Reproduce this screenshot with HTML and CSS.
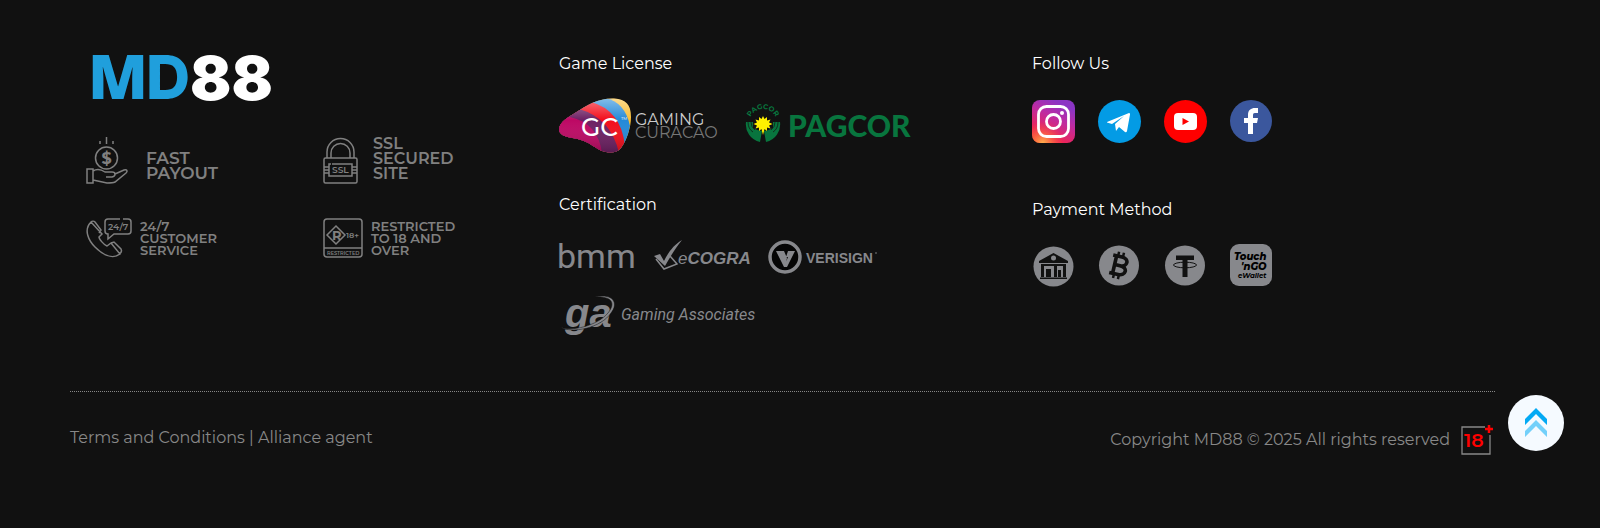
FILE: index.html
```html
<!DOCTYPE html>
<html lang="en">
<head>
  <meta charset="UTF-8">
  <title>MD88</title>
  <meta name="viewport" content="width=device-width, initial-scale=1.0">
  <link rel="stylesheet" href="styles.css">
</head>
<body>
  <footer class="footer">
    <div class="footer-top">
      <div class="footer-brand">
        <a href="#" class="logo" aria-label="MD88">
          <svg width="184" height="52" viewBox="0 0 184 52">
            <text class="logo-m" x="-4" y="47">M</text>
            <text class="logo-d" x="54" y="47">D</text>
            <text class="logo-88" x="98" y="48">88</text>
          </svg>
        </a>

        <ul class="features">
          <li class="feature feature-large">
            <svg class="line-icon" width="44" height="48" viewBox="0 0 44 48">
              <path d="M14 8V5M20.500 8V1M27 8V5"/>
              <circle cx="20.500" cy="22" r="11"/>
              <path d="M1 33h6v14H1zM7 35c5-3 9-1 12 1h7c4 0 4 4 0 5h-6M29 38l9-4c3-1 4 1 2 3L29 46c-2 1-6 1-8 1L7 44"/>
              <text class="dollar" x="15.500" y="28">$</text>
            </svg>
            <span>FAST<br>PAYOUT</span>
          </li>
          <li class="feature feature-large feature-ssl">
            <svg class="line-icon" width="36" height="48" viewBox="0 0 36 48">
              <path d="M4 22V16a13 13 0 0 1 27 0v6M8 22V17a9 9 0 0 1 19 0v5"/>
              <rect x="1" y="22" width="33" height="25" rx="1.500"/>
              <path d="M9 28h20v12H6V28h2M1 31h5M1 34h5M1 37h5M29 31h5M29 34h5M29 37h5"/>
              <text class="ssl" x="9" y="37">SSL</text>
            </svg>
            <span>SSL<br>SECURED<br>SITE</span>
          </li>
          <li class="feature">
            <svg class="line-icon" width="46" height="40" viewBox="0 0 46 40">
              <path d="M5 4C-3 12 3 23 9 29c7 7 17 13 25 7l-9-11-4 3c-3-1-8-7-8-9l3-3zM5 4c1-1 3-1 4 0l6 8-2 3M25 25l3-1 7 7c1 2 0 4-2 5"/>
              <path d="M34 1H22a3 3 0 0 0-3 3v9a3 3 0 0 0 3 3v5l6-5h14a3 3 0 0 0 3-3V4a3 3 0 0 0-3-3h-5"/>
              <text class="hours" x="22" y="12">24/7</text>
            </svg>
            <span>24/7<br>CUSTOMER<br>SERVICE</span>
          </li>
          <li class="feature">
            <svg class="line-icon" width="40" height="40" viewBox="0 0 40 40">
              <rect x="1" y="1" width="38" height="38" rx="3"/>
              <path d="M13 8l9 9-9 9-9-9zM1 30h38"/>
              <text class="r-mark" x="9" y="22">R</text>
              <text class="age" x="23" y="20">18+</text>
              <text class="restricted" x="4" y="37">RESTRICTED</text>
            </svg>
            <span>RESTRICTED<br>TO 18 AND<br>OVER</span>
          </li>
        </ul>
      </div>

      <div class="footer-licenses">
        <section class="group">
          <h3>Game License</h3>
          <div class="licenses">
            <svg width="168" height="55" viewBox="0 0 168 55" role="img" aria-label="Gaming Curacao">
              <defs>
                <clipPath id="gc-shape">
                  <path d="M0 31C1 23 10 19 16 15C28 7 40 0 55 0.500C67 1 72 7 72 19C72 29 68 42 62 50C57 56 49 55 43 53C36 50 30 44 22 42C14 39 0 40 0 31z"/>
                </clipPath>
                <linearGradient id="gc-shine" x1="0" y1="0" x2="0" y2="1">
                  <stop offset="0" stop-color="#fff" stop-opacity=".45"/>
                  <stop offset=".4" stop-color="#fff" stop-opacity="0"/>
                  <stop offset="1" stop-color="#000" stop-opacity=".2"/>
                </linearGradient>
              </defs>
              <g clip-path="url(#gc-shape)">
                <rect width="74" height="55" fill="#f8bd35"/>
                <path d="M0 0H46Q66 4 71 28L66 55H0z" fill="#2389d8"/>
                <path d="M0 0L32 4Q62 12 66 48L60 55H0z" fill="#f20d1b"/>
                <path d="M0 0L20 11Q52 20 60 55H0z" fill="#6d2063"/>
                <path d="M0 16L11 19Q39 25 43 55H0z" fill="#bd0864"/>
                <rect width="74" height="55" fill="url(#gc-shine)"/>
              </g>
              <text class="gc" x="22" y="38">GC</text>
              <text class="gc-tm" x="62" y="22">TM</text>
              <text class="gc-name" x="76" y="27">GAMING</text>
              <text class="gc-name gc-sub" x="76" y="40">CURACAO</text>
            </svg>
            <svg class="pagcor" width="168" height="36" viewBox="0 0 168 36" role="img" aria-label="PAGCOR">
              <path id="seal-arc" d="M4 15A14 14 0 0 1 32 15" fill="none"/>
              <text class="seal-text"><textPath href="#seal-arc" startOffset="50%" text-anchor="middle">PAGCOR</textPath></text>
              <path d="M1 14H8V20Q13 23 17 23L15 34A18 18 0 0 1 1 14zM35 14H28V20Q23 23 19 23L21 34A18 18 0 0 0 35 14z" fill="#08753e"/>
              <path d="M3 14q0 7 5 10M6 14q0 5 4 8M33 14q0 7-5 10M30 14q0 5-4 8" fill="none" stroke="#111" stroke-width=".7"/>
              <path d="M18 8l1.500 3 2.500-2 0 3.500 3.500-1-1.500 3 3.500 1.500-3.500 1.500 1.500 3-3.500-1 0 3.500-2.500-2-1.500 6-1.500-6-2.500 2 0-3.500-3.500 1 1.500-3-3.500-1.500 3.500-1.500-1.500-3 3.500 1 0-3.500 2.500 2z" fill="#fff000"/>
              <text class="pagcor-name" x="43" y="29">PAGCOR</text>
            </svg>
          </div>
        </section>

        <section class="group">
          <h3>Certification</h3>
          <div class="certificates">
            <svg width="78" height="36" viewBox="0 0 78 36" role="img" aria-label="bmm">
              <text class="bmm" x="-2" y="29">bmm</text>
            </svg>
            <svg width="99" height="36" viewBox="0 0 99 36" role="img" aria-label="eCOGRA">
              <path d="M1 17l6-2 4 7C16 12 21 6 29 1C22 10 17 18 12 27z" fill="#87888c"/>
              <path d="M3 20l8 10 13-5-7-8" fill="none" stroke="#87888c" stroke-width="1.500"/>
              <text class="ecogra" x="25" y="25"><tspan class="ecogra-e">e</tspan>COGRA</text>
            </svg>
            <svg width="110" height="36" viewBox="0 0 110 36" role="img" aria-label="Verisign">
              <circle cx="17" cy="18" r="15" fill="#050505" stroke="#87888c" stroke-width="3.500"/>
              <path d="M8 12h8l3 7-2 9h-1zM20 12h7l-8 16h-3l4-10h-2z" fill="#87888c"/>
              <text class="verisign" x="38" y="24">VERISIGN</text>
              <circle cx="108" cy="14" r=".8" fill="#87888c"/>
            </svg>
            <svg width="200" height="42" viewBox="0 0 200 42" role="img" aria-label="Gaming Associates">
              <text class="ga" x="6" y="32">ga</text>
              <path d="M1 32C12 37 38 31 49 18C57 8 53 1 36 2C54-2 60 8 52 18C42 33 13 39 1 32z" fill="#87888c" stroke="#111" stroke-width=".5"/>
              <text class="ga-name" x="62" y="25">Gaming Associates</text>
            </svg>
          </div>
        </section>
      </div>

      <div class="footer-links">
        <section class="group">
          <h3>Follow Us</h3>
          <div class="icon-row social">
            <a href="#" aria-label="Instagram">
              <svg viewBox="0 0 43 43">
                <defs>
                  <linearGradient id="ig-base" x1="0" y1="1" x2=".5" y2="0">
                    <stop offset="0" stop-color="#ff4b2d"/>
                    <stop offset=".3" stop-color="#ed2459"/>
                    <stop offset=".7" stop-color="#bd2ba3"/>
                    <stop offset="1" stop-color="#8b35c4"/>
                  </linearGradient>
                  <radialGradient id="ig-warm" cx=".25" cy="1" r=".5">
                    <stop offset="0" stop-color="#ffb14d"/>
                    <stop offset="1" stop-color="#ff5035" stop-opacity="0"/>
                  </radialGradient>
                </defs>
                <rect width="43" height="43" rx="8" fill="url(#ig-base)"/>
                <rect width="43" height="43" rx="8" fill="url(#ig-warm)"/>
                <rect x="6.500" y="6.500" width="30" height="30" rx="8" fill="none" stroke="#fff" stroke-width="2.800"/>
                <circle cx="21.500" cy="21.500" r="7" fill="none" stroke="#fff" stroke-width="2.800"/>
                <circle cx="30" cy="13" r="2" fill="#fff"/>
              </svg>
            </a>
            <a href="#" aria-label="Telegram">
              <svg viewBox="0 0 43 43">
                <circle cx="21.500" cy="21.500" r="21.500" fill="#039be5"/>
                <path d="M9 22L31 13q1.500 0 1 1.500L29 31q-.5 2-2 1l-6-5-3 4-1-7 9-8-12 8-5-1.500z" fill="#fff"/>
              </svg>
            </a>
            <a href="#" aria-label="YouTube">
              <svg viewBox="0 0 43 43">
                <circle cx="21.500" cy="21.500" r="21.500" fill="#f00"/>
                <rect x="10" y="13" width="23" height="17" rx="4" fill="#fff"/>
                <path d="M18.500 18l6.500 3.500-6.500 3.500z" fill="#f00"/>
              </svg>
            </a>
            <a href="#" aria-label="Facebook">
              <svg viewBox="0 0 43 43">
                <circle cx="21" cy="21" r="21" fill="#3b579d"/>
                <path d="M18 34V23h-4v-5h4v-3c0-5 3-7 7-7h3v5h-3c-2 0-2 1-2 3v2h5l-1 5h-4v11z" fill="#fff"/>
              </svg>
            </a>
          </div>
        </section>

        <section class="group">
          <h3>Payment Method</h3>
          <div class="icon-row">
            <svg viewBox="0 0 43 43" role="img" aria-label="Bank transfer">
              <circle cx="21.500" cy="22.500" r="20" fill="#87888c"/>
              <path d="M7 19v-2l14.500-8L36 17v2zM9 20h25v2H9zM9 22h3v11H9zM14 25h5v8h-5zM22 22h3v11h-3zM31 22h3v11h-3zM26 26h3v7h-3zM8 33.500h27v1.500H8z" fill="#111"/>
              <circle cx="21.500" cy="14" r="2.500" fill="#87888c"/>
            </svg>
            <svg viewBox="0 0 43 43" role="img" aria-label="Bitcoin">
              <circle cx="21" cy="21.500" r="20" fill="#87888c"/>
              <g transform="rotate(13 21 21.500)" fill="none" stroke="#111">
                <path d="M13 12.500h9c8 0 8 9 0 9h-5M16.500 12v18M22 21.500c9 0 8 9 0 9h-9" stroke-width="3.600"/>
                <path d="M18 8v4M23 8v4M18 31v4M23 31v4" stroke-width="2.500"/>
              </g>
            </svg>
            <svg viewBox="0 0 43 43" role="img" aria-label="Tether">
              <circle cx="21" cy="21.500" r="20" fill="#87888c"/>
              <path d="M12 11.500h18V16h-6.500v17h-5V16H12z" fill="#111"/>
              <ellipse cx="21" cy="21" rx="11.500" ry="2.800" fill="none" stroke="#111" stroke-width="1"/>
            </svg>
            <svg viewBox="0 0 43 43" role="img" aria-label="Touch n Go eWallet">
              <rect width="42" height="42" rx="9" fill="#87888c"/>
              <text class="tng" x="4" y="16">Touch</text>
              <text class="tng" x="11" y="26">'nGO</text>
              <text class="tng-wallet" x="8" y="34">eWallet</text>
            </svg>
          </div>
        </section>
      </div>
    </div>

    <div class="footer-bottom">
      <p><a href="#">Terms and Conditions</a> | <a href="#">Alliance agent</a></p>
      <div class="copyright">
        <span>Copyright MD88 © 2025 All rights reserved</span>
        <svg width="34" height="32" viewBox="0 0 34 32" role="img" aria-label="18+">
          <path d="M24 3H1v27h28V11" fill="none" stroke="#888" stroke-width="1.300"/>
          <text class="adult" x="3" y="23">18</text>
          <path d="M28 1v8M24 5h8" stroke="#f00" stroke-width="2.500"/>
        </svg>
      </div>
    </div>
  </footer>

  <button class="to-top" type="button" aria-label="Back to top" onclick="window.scrollTo(0, 0)">
    <svg width="56" height="56" viewBox="0 0 56 56">
      <path d="M17 24l11-11 11 11v6L28 19 17 30z" fill="#03a9f4"/>
      <path d="M17 36l11-11 11 11v6L28 31 17 42z" fill="#73d0fa"/>
    </svg>
  </button>
</body>
</html>
```
FILE: styles.css
```css
* {
  box-sizing: border-box;
  margin: 0;
  padding: 0;
}

body {
  background: #111;
  color: #888;
  font-family: Montserrat, Inter, sans-serif;
  font-size: 16px;
  line-height: 28px;
}

a {
  color: inherit;
  text-decoration: none;
}

svg {
  display: block;
  flex-shrink: 0;
  overflow: visible;
}

.footer {
  padding: 50px 105px 72px 70px;
}

.footer-top {
  display: grid;
  grid-template-columns: 489fr 473fr 463fr;
  padding-bottom: 54px;
  border-bottom: 1px dotted #888;
}

.logo {
  display: block;
  margin: 2px 0 32px 22px;
}

.logo text {
  font-family: Inter, sans-serif;
  font-size: 61px;
  font-weight: 900;
  fill: #fff;
}

.logo .logo-m {
  font-family: "Liberation Sans Narrow", "Open Sans", sans-serif;
  font-size: 62px;
  fill: #209fdc;
}

.logo .logo-d {
  font-weight: 800;
  fill: #209fdc;
}

.features {
  display: grid;
  grid-template-columns: 237px 1fr;
  row-gap: 34px;
  padding-left: 16px;
  list-style: none;
}

.feature {
  display: flex;
  align-items: center;
  gap: 8px;
  color: #808080;
  font-size: 13px;
  font-weight: 600;
  line-height: 12px;
}

.feature-large {
  align-items: flex-end;
  gap: 16px;
  font-size: 17px;
  line-height: 15px;
}

.feature-ssl {
  gap: 14px;
  font-size: 16px;
}

.feature-large span {
  padding-bottom: 3px;
}

.line-icon {
  fill: none;
  stroke: #808080;
  stroke-width: 1.5;
}

.line-icon text {
  fill: #808080;
  stroke: none;
}

.dollar {
  font-size: 16px;
  font-weight: 700;
}

.ssl,
.hours {
  font-size: 9px;
}

.r-mark {
  font-size: 13px;
  font-weight: 700;
}

.age {
  font-size: 8px;
}

.restricted {
  font-size: 5px;
}

.group + .group {
  margin-top: 38px;
}

.footer-links .group + .group {
  margin-top: 51px;
}

h3 {
  margin-bottom: 20px;
  color: #fff;
  font-size: 16px;
  font-weight: 400;
}

.licenses {
  display: flex;
  gap: 18px;
}

.pagcor {
  margin-top: 10px;
}

.gc {
  font-size: 25px;
  font-weight: 500;
  fill: #fff;
}

.gc-tm {
  font-size: 4px;
  fill: #fff;
}

.gc-name {
  font-size: 16px;
  fill: #ccc;
}

.gc-sub {
  fill: #777;
}

.seal-text {
  font-size: 7px;
  font-weight: 700;
  fill: #08753e;
}

.pagcor-name {
  font-family: Lato, sans-serif;
  font-size: 30px;
  font-weight: 900;
  fill: #08753e;
}

.certificates {
  display: flex;
  flex-wrap: wrap;
  gap: 20px 16px;
  max-width: 400px;
}

.certificates text {
  fill: #87888c;
}

.bmm {
  font-family: Roboto, sans-serif;
  font-size: 34px;
}

.ecogra {
  font-family: "Liberation Sans", sans-serif;
  font-size: 17px;
  font-style: italic;
  font-weight: 700;
}

.ecogra-e {
  font-weight: 400;
}

.verisign {
  font-family: "Liberation Sans", sans-serif;
  font-size: 14px;
  font-weight: 700;
}

.ga {
  font-family: "Liberation Sans", sans-serif;
  font-size: 40px;
  font-style: italic;
  font-weight: 700;
}

.ga-name {
  font-family: Roboto, sans-serif;
  font-size: 16px;
  font-style: italic;
}

.icon-row {
  display: flex;
  gap: 23px;
}

.icon-row svg {
  width: 43px;
  height: 43px;
}

.social {
  padding: 2px 0;
}

.tng {
  font-size: 10px;
  font-style: italic;
  font-weight: 800;
}

.tng-wallet {
  font-size: 7px;
  font-style: italic;
  font-weight: 700;
}

.footer-bottom {
  display: flex;
  justify-content: space-between;
  padding-top: 32px;
}

.copyright {
  display: flex;
  align-items: center;
  gap: 11px;
}

.adult {
  font-size: 19px;
  font-weight: 600;
  fill: #f00;
}

.to-top {
  position: fixed;
  right: 36px;
  bottom: 77px;
  width: 56px;
  height: 56px;
  border: none;
  border-radius: 50%;
  background: #f5faff;
  cursor: pointer;
}
```
